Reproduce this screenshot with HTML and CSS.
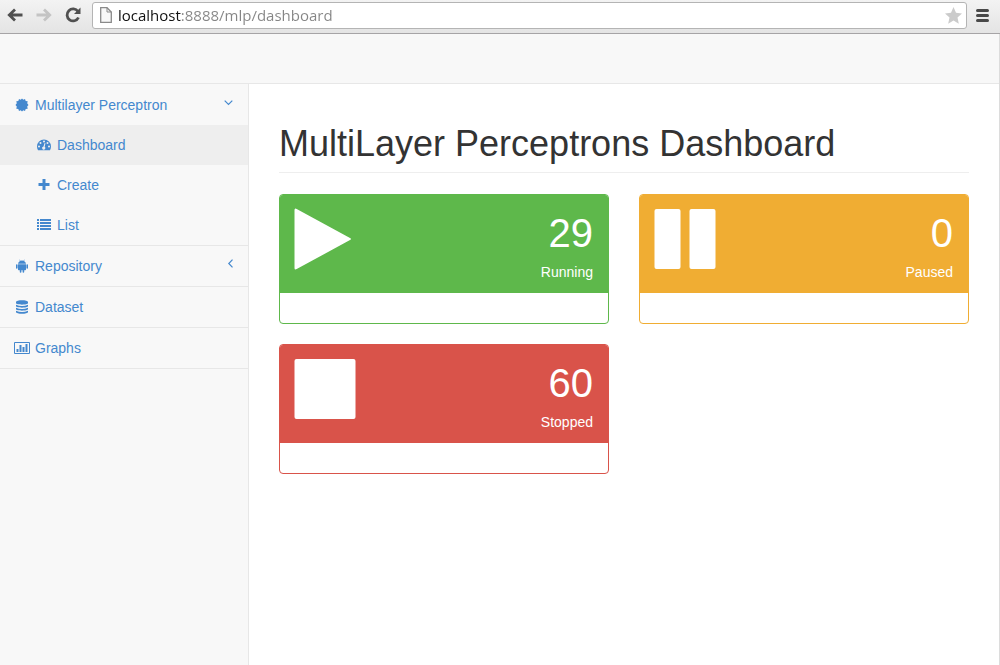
FILE: index.html
```html
<!DOCTYPE html>
<html lang="en">
<head>
<meta charset="utf-8">
<title>MultiLayer Perceptrons Dashboard</title>
<link rel="stylesheet" href="styles.css">
</head>
<body>
<header class="toolbar">
  <button class="tool" type="button" aria-label="Back"><svg width="16" height="14" viewBox="0 0 16 14"><path d="M15.500 7H3M8 1.500L2.300 7L8 12.500" fill="none" stroke="#505050" stroke-width="2.800"/></svg></button>
  <button class="tool" type="button" aria-label="Forward"><svg width="16" height="14" viewBox="0 0 16 14"><path d="M.500 7H13M8 1.500L13.700 7L8 12.500" fill="none" stroke="#c4c4c4" stroke-width="2.800"/></svg></button>
  <button class="tool" type="button" aria-label="Reload"><svg width="16" height="16" viewBox="0 0 16 16"><path d="M13 4.500A6 6 0 1 0 13.500 10.500" fill="none" stroke="#505050" stroke-width="2.800"/><path d="M15.500 .500V7H9z" fill="#505050"/></svg></button>
  <div class="omnibox">
    <svg width="12" height="16" viewBox="0 0 12 16"><path d="M.700 .700H7L11.300 5V15.300H.700z" fill="#f8f8f8" stroke="#8a8a8a" stroke-width="1.300"/><path d="M7 .700V5H11.300" fill="none" stroke="#8a8a8a"/></svg>
    <input class="url" type="text" aria-label="Address" value="localhost:8888/mlp/dashboard">
    <button class="star" type="button" aria-label="Bookmark"><svg width="17" height="17" viewBox="0 0 17 17"><path d="M8.500 0L11 5.800L17 6.400L12.500 10.500L13.800 16.800L8.500 13.500L3.200 16.800L4.500 10.500L0 6.400L6 5.800z" fill="#cbcbcb"/></svg></button>
  </div>
  <button class="menu" type="button" aria-label="Menu"><svg width="13" height="13" viewBox="0 0 13 13"><path d="M1.500 1.500H11.500M1.500 6.500H11.500M1.500 11.500H11.500" stroke="#484848" stroke-width="3" stroke-linecap="round"/></svg></button>
</header>
<div class="page">
  <div class="navbar"></div>
  <div class="layout">
    <nav class="sidebar">
      <ul class="menu-list">
        <li class="menu-item">
          <a class="link" href="#"><svg class="icon" width="14" height="14" viewBox="0 0 14 14"><path d="M7 .500L8.300 1.800L10 1L10.700 2.900L12.700 3.200L12.200 5.200L13.500 7L12.200 8.600L12.700 10.700L10.700 11.100L10 13L8.300 12.200L7 13.500L5.700 12.200L4 13L3.300 11.100L1.300 10.700L1.800 8.600L.500 7L1.800 5.200L1.300 3.200L3.300 2.900L4 1L5.700 1.800z"/></svg><span>Multilayer Perceptron</span><svg class="chevron" width="9" height="6" viewBox="0 0 9 6"><path d="M.700 .700L4.500 4.500L8.300 .700"/></svg></a>
          <ul class="submenu">
            <li><a class="link active" href="#"><svg class="icon" width="14" height="14" viewBox="0 0 14 14"><path fill-rule="evenodd" d="M0 8.500A7 7 0 0 1 14 8.500C14 10 13.600 11.200 13 12.300H1C.400 11.200 0 10 0 8.500zM2 7.500a1 1 0 1 0 0 2a1 1 0 0 0 0-2zM3.500 4a1 1 0 1 0 0 2a1 1 0 0 0 0-2zM7 2.500a1 1 0 1 0 0 2a1 1 0 0 0 0-2zM10.500 4a1 1 0 1 0 0 2a1 1 0 0 0 0-2zM12 7.500a1 1 0 1 0 0 2a1 1 0 0 0 0-2zM7.600 5L6.500 8.500A1.600 1.600 0 1 0 7.700 8.800L8.500 5.300z"/></svg><span>Dashboard</span></a></li>
            <li><a class="link" href="#"><svg class="icon" width="14" height="14" viewBox="0 0 14 14"><path d="M5.500 1h3v4h4v3h-4v4h-3v-4h-4v-3h4z"/></svg><span>Create</span></a></li>
            <li><a class="link" href="#"><svg class="icon" width="14" height="14" viewBox="0 0 14 14"><path d="M0 1h2v2H0zM0 4h2v2H0zM0 7h2v2H0zM0 10h2v2H0zM3 1h11v2H3zM3 4h11v2H3zM3 7h11v2H3zM3 10h11v2H3z"/></svg><span>List</span></a></li>
          </ul>
        </li>
        <li class="menu-item"><a class="link" href="#"><svg class="icon" width="14" height="14" viewBox="0 0 14 14"><path d="M3 4.800A3.900 3.500 0 0 1 5 2L4.300 .800L4.600 .600L5.400 1.800Q7 1.300 8.600 1.800L9.400 .600L9.700 .800L9 2A3.900 3.500 0 0 1 11 4.800zM3 5.200H11V10.500Q11 11.200 10.300 11.200H9.200V13a.8.8 0 0 1-1.600 0V11.200H6.400V13a.8.8 0 0 1-1.600 0V11.200H3.700Q3 11.200 3 10.500zM1 6a.8.8 0 0 1 1.600 0V9a.8.8 0 0 1-1.600 0zM11.400 6a.8.8 0 0 1 1.600 0V9a.8.8 0 0 1-1.600 0z"/></svg><span>Repository</span><svg class="chevron" width="5" height="9" viewBox="0 0 5 9"><path d="M4.500 .700L.800 4.500L4.500 8.300"/></svg></a></li>
        <li class="menu-item"><a class="link" href="#"><svg class="icon" width="14" height="14" viewBox="0 0 14 14"><path d="M1 2C1-.400 13-.400 13 2V3C13 5.200 1 5.200 1 3zM1 4.700Q7 7.200 13 4.700V6C13 8.200 1 8.200 1 6zM1 7.700Q7 10.200 13 7.700V9C13 11.200 1 11.200 1 9zM1 10.700Q7 13.200 13 10.700V12C13 14.400 1 14.400 1 12z"/></svg><span>Dataset</span></a></li>
        <li class="menu-item"><a class="link" href="#"><svg class="icon" width="16" height="14" viewBox="0 0 16 14"><path fill-rule="evenodd" d="M1 1H15Q16 1 16 2V12Q16 13 15 13H1Q0 13 0 12V2Q0 1 1 1zM1 2V12H15V2zM2.500 8H4.500V11H2.500zM5.500 4H7.500V11H5.500zM8.500 6H10.500V11H8.500zM11.500 3H13.500V11H11.500z"/></svg><span>Graphs</span></a></li>
      </ul>
    </nav>
    <main class="content">
      <h1 class="title">MultiLayer Perceptrons Dashboard</h1>
      <div class="cards">
        <section class="card green">
          <div class="card-head"><svg class="glyph" width="62" height="62" viewBox="0 0 62 62"><path d="M-.500 2Q-.500-.300 1.700 .900L55 30Q57 31 55 32L1.700 61.100Q-.500 62.300-.500 60z"/></svg><div class="stat"><div class="count">29</div><div class="label">Running</div></div></div>
          <div class="card-foot"></div>
        </section>
        <section class="card amber">
          <div class="card-head"><svg class="glyph" width="62" height="62" viewBox="0 0 62 62"><rect x="-.500" y="1" width="26" height="60" rx="2"/><rect x="34.500" y="1" width="26" height="60" rx="2"/></svg><div class="stat"><div class="count">0</div><div class="label">Paused</div></div></div>
          <div class="card-foot"></div>
        </section>
        <section class="card red">
          <div class="card-head"><svg class="glyph" width="62" height="62" viewBox="0 0 62 62"><rect x="-.500" y="1" width="61" height="60" rx="2"/></svg><div class="stat"><div class="count">60</div><div class="label">Stopped</div></div></div>
          <div class="card-foot"></div>
        </section>
      </div>
    </main>
  </div>
</div>
</body>
</html>
```
FILE: styles.css
```css
* { box-sizing: border-box; }

body {
  margin: 0;
  min-height: 100vh;
  display: flex;
  flex-direction: column;
  font: 14px/20px "Liberation Sans", Arial, sans-serif;
  color: #333;
  background: #fff;
}

button {
  display: flex;
  padding: 0;
  border: 0;
  background: none;
}

svg { display: block; flex: none; }

.toolbar {
  display: flex;
  align-items: center;
  gap: 13px;
  height: 34px;
  padding: 0 11px 3px 7px;
  border-bottom: 1px solid #a6a4a6;
  background: linear-gradient(#f3f3f3, #e4e4e4);
}

.omnibox {
  flex: 1;
  display: flex;
  align-items: center;
  gap: 6px;
  height: 27px;
  margin: 0 -4px 0 -2px;
  padding: 0 4px 0 7px;
  border: 1px solid #b4b4b4;
  border-radius: 3px;
  background: #fff;
}

.url {
  flex: 1;
  min-width: 0;
  height: 24px;
  padding: 0;
  border: 0;
  outline: 0;
  font: 15px/24px "Open Sans", "Noto Sans", sans-serif;
  color: transparent;
  background: linear-gradient(to right, #111 63px, #858585 63px);
  background-clip: text;
}

.page {
  flex: 1;
  display: flex;
  flex-direction: column;
  border-right: 1px solid #dcdcdc;
}

.navbar {
  height: 50px;
  border-bottom: 1px solid #e7e7e7;
  background: #f8f8f8;
}

.layout { flex: 1; display: flex; }

.sidebar {
  flex: none;
  width: 249px;
  padding-top: 1px;
  border-right: 1px solid #e7e7e7;
  background: #f8f8f8;
}

.menu-list, .submenu { margin: 0; padding: 0; list-style: none; }

.menu-item { border-bottom: 1px solid #e7e7e7; }

.link {
  display: flex;
  align-items: center;
  gap: 6px;
  height: 40px;
  padding: 0 15px;
  color: #4488ce;
  text-decoration: none;
}

.submenu .link { padding-left: 37px; }

.active { background: #eee; }

.icon { fill: #4488ce; margin: 0 -1px; }
.menu-item > .link .icon { width: 16px; }
.submenu .icon { margin: 0; }

.chevron {
  margin: 0 0 5px auto;
  overflow: visible;
  fill: none;
  stroke: #4488ce;
  stroke-width: 1.2;
}

.content { flex: 1; min-width: 0; padding: 40px 30px; }

.title {
  margin: 0 0 21px;
  padding-bottom: 9px;
  border-bottom: 1px solid #eee;
  font-size: 36px;
  line-height: 39px;
  font-weight: 400;
}

.cards {
  display: grid;
  grid-template-columns: 1fr 1fr;
  gap: 20px 30px;
}

.card {
  overflow: hidden;
  border: 1px solid;
  border-radius: 4px;
  background: #fff;
}

.card-head {
  display: flex;
  justify-content: space-between;
  padding: 13px 15px 11px;
}

.card-foot { height: 30px; }

.glyph { fill: #fff; overflow: visible; }

.stat { padding-top: 1px; color: #fff; text-align: right; }

.count { font-size: 40px; line-height: 48px; }

.label { margin-top: 5px; }

.green { border-color: #5eb84b; }
.green .card-head { background: #5eb84b; }
.amber { border-color: #f0ad33; }
.amber .card-head { background: #f0ad33; }
.red { border-color: #d9534a; }
.red .card-head { background: #d9534a; }
```
